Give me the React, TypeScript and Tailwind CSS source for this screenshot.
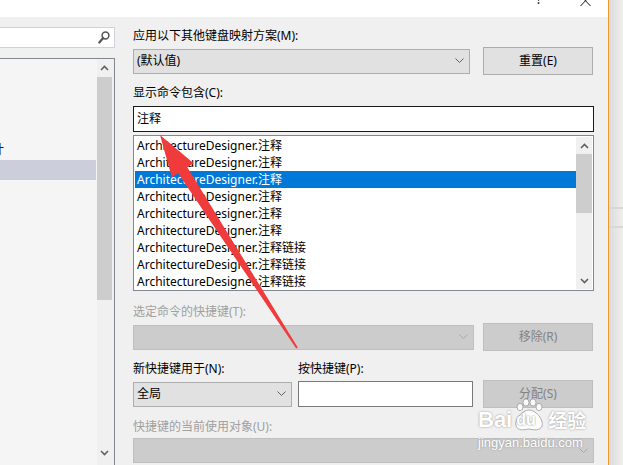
import React from "react";

const Chevron = ({ color = "#606060" }: { color?: string }) => (
  <svg width="9" height="6" viewBox="0 0 9 6">
    <polyline points="0.5,0.5 4.5,4.5 8.5,0.5" fill="none" stroke={color} strokeWidth="1" />
  </svg>
);

const ScrollArrow = ({ up }: { up: boolean }) => (
  <svg width="9" height="6" viewBox="0 0 9 6">
    <polyline
      points={up ? "1,5 4.5,1.5 8,5" : "1,1 4.5,4.5 8,1"}
      fill="none"
      stroke="#606060"
      strokeWidth="1.6"
    />
  </svg>
);

const rows = [
  "ArchitectureDesigner.注释",
  "ArchitectureDesigner.注释",
  "ArchitectureDesigner.注释",
  "ArchitectureDesigner.注释",
  "ArchitectureDesigner.注释",
  "ArchitectureDesigner.注释",
  "ArchitectureDesigner.注释链接",
  "ArchitectureDesigner.注释链接",
  "ArchitectureDesigner.注释链接",
];

export default function App() {
  return (
    <div className="relative flex w-[623px] h-[465px] overflow-hidden bg-[#f0f0f0] text-[12px] leading-[16px] text-black font-['Noto_Sans','Noto_Sans_CJK_SC',sans-serif]">
      {/* dialog */}
      <div className="flex flex-col w-[608px] h-full">
        {/* title bar */}
        <div className="relative h-[17px] bg-white shrink-0">
          <span className="absolute left-[536px] top-[-9px] text-[14px] leading-[16px] text-[#333]">?</span>
          <svg className="absolute left-[580px] top-[-5px]" width="11" height="12" viewBox="0 0 11 12">
            <line x1="0.5" y1="0.5" x2="10.5" y2="11" stroke="#111" strokeWidth="1" />
            <line x1="10.5" y1="0.5" x2="0.5" y2="11" stroke="#111" strokeWidth="1" />
          </svg>
        </div>
        {/* body */}
        <div className="flex flex-1 min-h-0">
          {/* left column */}
          <div className="flex flex-col w-[115px] shrink-0">
            <div className="mt-[10px] h-[21px] bg-white border border-l-0 border-[#cfd1dc] flex items-center justify-end pr-[4px]">
              <svg width="12" height="13" viewBox="0 0 12 13">
                <circle cx="7.5" cy="4.5" r="3.4" fill="none" stroke="#555" strokeWidth="1.5" />
                <line x1="5.2" y1="7" x2="1.3" y2="11.5" stroke="#555" strokeWidth="2.2" strokeLinecap="round" />
              </svg>
            </div>
            <div className="mt-[10px] flex-1 flex border-t border-r border-[#828790] bg-[#f5f5f5] overflow-hidden">
              <div className="w-[97px] flex flex-col overflow-hidden">
                <div className="h-[81px]" />
                <div className="h-[20px] flex items-center whitespace-nowrap ml-[-20px] text-[#1e1e1e]">设计</div>
                <div className="h-[20px] w-[96px] bg-[#cccedb]" />
              </div>
              <div className="w-[17px] bg-[#f0f0f0] flex flex-col">
                <div className="h-[17px] flex items-center justify-center pr-[2px]">
                  <ScrollArrow up />
                </div>
                <div className="mt-[1px] h-[223px] w-[15px] bg-[#cdcdcd]" />
                <div className="flex-1" />
                <div className="h-[17px] flex items-start justify-center pr-[2px] pt-[2px]">
                  <ScrollArrow up={false} />
                </div>
              </div>
            </div>
          </div>

          {/* right column */}
          <div className="ml-[18px] w-[461px] flex flex-col">
            <div className="mt-[11px] whitespace-nowrap">应用以下其他键盘映射方案(M):</div>
            <div className="mt-[3px] flex items-center">
              <div className="w-[337px] h-[25px] bg-[#e1e1e1] border border-[#adadad] flex items-center justify-between pl-[3px] pr-[5px]">
                <span>(默认值)</span>
                <Chevron />
              </div>
              <div className="ml-[13px] w-[110px] h-[28px] bg-[#e1e1e1] border border-[#adadad] flex items-center justify-center">
                重置(E)
              </div>
            </div>

            <div className="mt-[10px] whitespace-nowrap">显示命令包含(C):</div>
            <div className="mt-[5px] h-[26px] bg-white border border-[#1a1a1a] flex items-center pl-[3px]">注释</div>

            <div className="mt-[3px] h-[156px] border border-[#828790] bg-white p-[1px] flex overflow-hidden">
              <div className="flex-1 flex flex-col overflow-hidden">
                {rows.map((r, i) => (
                  <div
                    key={i}
                    className={
                      i === 2
                        ? "h-[17px] shrink-0 flex items-center pl-[2px] whitespace-nowrap bg-[#0078d7] text-white"
                        : "h-[17px] shrink-0 flex items-center pl-[2px] whitespace-nowrap"
                    }
                  >
                    {r}
                  </div>
                ))}
              </div>
              <div className="w-[16px] bg-[#f0f0f0] flex flex-col">
                <div className="h-[17px] flex items-center justify-center">
                  <ScrollArrow up />
                </div>
                <div className="h-[59px] bg-[#cdcdcd]" />
                <div className="flex-1" />
                <div className="h-[17px] flex items-center justify-center">
                  <ScrollArrow up={false} />
                </div>
              </div>
            </div>

            <div className="mt-[13px] whitespace-nowrap text-[#a0a0a0]">选定命令的快捷键(T):</div>
            <div className="mt-[3px] flex items-center">
              <div className="w-[341px] h-[25px] bg-[#cccccc] border border-[#bfbfbf] flex items-center justify-end pr-[5px]">
                <Chevron color="#a8a8a8" />
              </div>
              <div className="ml-[9px] w-[110px] h-[28px] bg-[#cccccc] border border-[#bfbfbf] flex items-center justify-center text-[#838383]">
                移除(R)
              </div>
            </div>

            <div className="mt-[10px] flex whitespace-nowrap">
              <div className="w-[165px]">新快捷键用于(N):</div>
              <div>按快捷键(P):</div>
            </div>
            <div className="mt-[3px] flex items-center">
              <div className="w-[159px] h-[25px] bg-[#e1e1e1] border border-[#adadad] flex items-center justify-between pl-[3px] pr-[5px]">
                <span>全局</span>
                <Chevron />
              </div>
              <div className="ml-[6px] w-[175px] h-[26px] bg-white border border-[#7a7a7a]" />
              <div className="ml-[10px] w-[110px] h-[28px] bg-[#cccccc] border border-[#bfbfbf] flex items-center justify-center text-[#838383]">
                分配(S)
              </div>
            </div>

            <div className="mt-[11px] whitespace-nowrap text-[#a0a0a0]">快捷键的当前使用对象(U):</div>
            <div className="mt-[3px] h-[25px] bg-[#cccccc] border border-[#bfbfbf] flex items-center justify-end pr-[5px]">
              <Chevron color="#a8a8a8" />
            </div>
          </div>
        </div>
      </div>

      {/* window edge */}
      <div className="w-[1px] h-full bg-[#f19a2c] shrink-0" />
      <div className="flex-1 h-full bg-gradient-to-r from-[#dcdcdc] to-[#efefef] flex flex-col">
        <div className="h-[207px]" />
        <div className="h-[2px] bg-[#d8d8d8]" />
        <div className="h-[17px]" />
        <div className="h-[2px] bg-[#d8d8d8]" />
      </div>

      {/* baidu watermark */}
      <div className="absolute left-[478px] top-[396px] flex flex-col items-start text-white [text-shadow:0_0_2px_#8a8a8a] pointer-events-none">
        <div className="flex items-end h-[36px]">
          <span className="text-[22px] leading-[24px] font-bold font-[Arial,'Liberation_Sans',sans-serif]">Bai</span>
          <div className="relative w-[34px] h-[34px]">
            <svg className="absolute left-0 top-0" width="34" height="34" viewBox="0 0 34 34">
              <g fill="#ffffff" stroke="#9a9a9a" strokeWidth="0.8" fillOpacity="0.9">
                <ellipse cx="8" cy="9" rx="3" ry="3.6" />
                <ellipse cx="14" cy="4.5" rx="3" ry="3.6" />
                <ellipse cx="21" cy="4.5" rx="3" ry="3.6" />
                <ellipse cx="27" cy="9" rx="3" ry="3.6" />
                <path d="M17,12 C24,12 32,22 30,28 C28,33 22,32 17,31 C12,32 6,33 4,28 C2,22 10,12 17,12 Z" />
              </g>
            </svg>
            <span className="absolute left-[4px] top-[12px] text-[16px] leading-[20px] font-bold text-white [text-shadow:0_0_2px_#7a7a7a] font-[Arial,'Liberation_Sans',sans-serif]">du</span>
          </div>
          <span className="ml-[2px] text-[19px] leading-[24px] font-bold font-['Noto_Sans_CJK_SC',sans-serif]">经验</span>
        </div>
        <div className="mt-[4px] text-[13px] leading-[14px] font-[Arial,'Liberation_Sans',sans-serif]">jingyan.baidu.com</div>
      </div>

      {/* red arrow */}
      <svg className="absolute left-0 top-0 pointer-events-none" width="623" height="465" viewBox="0 0 623 465">
        <polygon
          points="160,135 193.6,163.3 187.3,167.3 297.8,347.5 296.2,348.5 178.1,173.3 171.8,177.3"
          fill="#ef3b3b"
        />
      </svg>
    </div>
  );
}
